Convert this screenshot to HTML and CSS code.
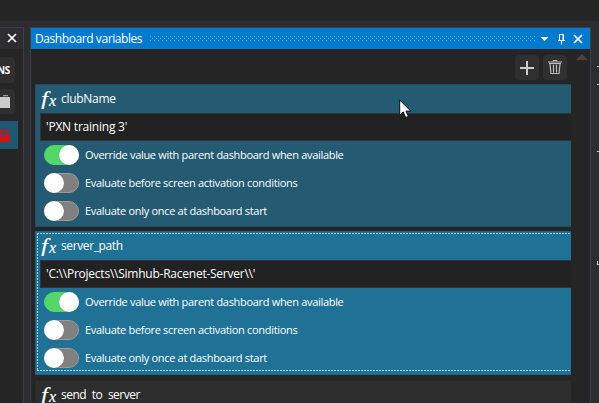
FILE: index.html
```html
<!DOCTYPE html>
<html lang="en">
<head>
<meta charset="utf-8">
<title>Dashboard variables</title>
<link rel="stylesheet" href="styles.css">
</head>
<body>
<svg width="0" height="0" class="defs">
  <symbol id="close" viewBox="0 0 10 10"><path d="M1 1l8 8M9 1l-8 8" stroke="#fff" stroke-width="1.7" fill="none"/></symbol>
</svg>
<div class="topbar"></div>
<div class="workspace">
  <aside class="side">
    <div class="side-head"><svg width="10" height="10"><use href="#close"/></svg></div>
    <div class="side-body">
      <div class="side-btn"><span>NS</span></div>
      <div class="side-btn second"><svg width="10" height="15" viewBox="0 0 10 15"><path d="M3 1h5v1.300H3z" fill="#999"/><path d="M0 3h10v11H0z" fill="#ccc"/></svg></div>
      <div class="side-active"><svg width="10" height="15" viewBox="0 0 10 15"><path d="M0 6V3.500C1 .8 3 .7 4 .7C7 .7 8.800 3 8.800 6V7H10V14.300H0V7H6.500V5.500C6.500 3.600 5.400 2.700 4 2.700S1.500 3.600 1.500 5.500V7H0z" fill="#c9151b"/></svg></div>
    </div>
  </aside>
  <main class="panel">
    <header class="title">
      <h1>Dashboard variables</h1>
      <svg class="grip" width="385" height="5"><defs><pattern id="dots" width="4" height="4" patternUnits="userSpaceOnUse"><path d="M0 0h1v1H0zM2 2h1v1H2z" fill="#62aee0"/></pattern></defs><rect width="385" height="5" fill="url(#dots)"/></svg>
      <svg class="tools" width="46" height="12" viewBox="0 0 46 12"><path d="M.5 4h8l-4 4z" fill="#fff"/><path d="M19.500 7V1.500h4V7M18 7.500h7M21.500 7.500v4" fill="none" stroke="#fff"/><path d="M23 1v6" stroke="#fff"/><path d="M34 2l8 8M42 2l-8 8" stroke="#fff" stroke-width="1.700"/></svg>
    </header>
    <div class="content">
      <div class="actions">
        <button aria-label="Add"><svg width="14" height="14" viewBox="0 0 14 14"><path d="M7 0v14M0 7h14" stroke="#ccc" stroke-width="2"/></svg></button>
        <button aria-label="Delete"><svg width="14" height="15" viewBox="0 0 14 15"><path d="M5 1.500V.5h4v1M0 2h14" fill="none" stroke="#bbb"/><path d="M1 3.500h12M2 4l1 9.500h8L12 4M5.500 4.500v8M8.500 4.500v8" fill="none" stroke="#bbb" stroke-width="1.200"/></svg></button>
        <svg class="scroll-up" width="12" height="6"><path d="M0 6l6-6 6 6z" fill="#454545"/></svg>
      </div>
      <section class="card">
        <h2><span class="fx"><b>f</b><sub>x</sub></span><span class="n1">clubName</span></h2>
        <div class="field"><span class="v1">'PXN training 3'</span></div>
        <div class="options">
          <div class="option"><i class="switch on"></i><span class="o1">Override value with parent dashboard when available</span></div>
          <div class="option"><i class="switch"></i><span class="o2">Evaluate before screen activation conditions</span></div>
          <div class="option"><i class="switch"></i><span class="o3">Evaluate only once at dashboard start</span></div>
        </div>
      </section>
      <section class="card selected">
        <h2><span class="fx"><b>f</b><sub>x</sub></span><span class="n2">server_path</span></h2>
        <div class="field"><span class="v2">'C:\\Projects\\Simhub-Racenet-Server\\'</span></div>
        <div class="options">
          <div class="option"><i class="switch on"></i><span class="o1">Override value with parent dashboard when available</span></div>
          <div class="option"><i class="switch"></i><span class="o2">Evaluate before screen activation conditions</span></div>
          <div class="option"><i class="switch"></i><span class="o3">Evaluate only once at dashboard start</span></div>
        </div>
        <svg class="focus" width="535" height="143"><path d="M1 2.500H535M1.500 2V140M1 139.500H535" fill="none" stroke="#a9d0e2" stroke-dasharray="2 1"/></svg>
      </section>
      <section class="card plain">
        <h2><span class="fx"><b>f</b><sub>x</sub></span><span class="n3">send to server</span></h2>
      </section>
    </div>
  </main>
  <svg class="edge" width="2" height="376"><path d="M0 39.500h2M0 57.500h2M0 124.500h2M.5 234v4M0 237.500h2" stroke="#b8d8dc" fill="none"/></svg>
</div>
<svg class="cursor" width="13" height="20" viewBox="0 0 13 20"><path d="M.7 1v15.200l3.500-3.300 2.500 5.700 2.700-1.200-2.400-5.300h4.800z" fill="#fff" stroke="#080d18"/></svg>
</body>
</html>
```
FILE: styles.css
```css
* { box-sizing: border-box; }
body { margin: 0; width: 599px; height: 403px; overflow: hidden; background: #2d2d30; color: #fff; font: 11px/16px "Open Sans", "Noto Sans", sans-serif; }
svg { display: block; flex: none; }
.defs { position: absolute; }
h1, h2 { margin: 0; font-weight: 400; font-size: 12px; }
span, h1 { white-space: nowrap; }
.topbar { height: 21px; background: #252526; }
.workspace { display: flex; height: 382px; padding-top: 6px; }
.side { width: 24px; border: solid #3f3f46; border-width: 1px 1px 0 0; background: #252526; }
.side-head { height: 21px; padding: 5px 0 0 7px; background: #2d2d30; }
.side-body { padding-top: 8px; }
.side-btn { width: 15px; height: 26px; border-radius: 0 4px 4px 0; background: #2f2f2f; display: flex; align-items: center; justify-content: flex-end; padding-right: 5px; font-size: 10px; font-weight: 700; letter-spacing: -.3px; }
.side-btn.second { height: 25px; margin-top: 6px; }
.side-active { width: 18px; height: 28px; margin-top: 7px; padding-top: 7px; background: #1f5872; }
.panel { width: 561px; margin-left: 6px; border: solid #3f3f46; border-width: 1px 1px 0; background: #252526; }
.title { display: flex; align-items: center; height: 21px; padding-left: 4px; background: #007acc; }
.title h1 { width: 107px; letter-spacing: -.42px; }
.grip { margin-left: 8px; width: 385px; }
.tools { margin-left: 5px; }
.content { padding-left: 4px; }
.actions { display: flex; height: 35px; padding: 6px 0 0 480px; gap: 4px; }
button { width: 24px; height: 25px; padding: 0; border: 0; border-radius: 4px; background: #303030; display: grid; place-items: center; }
.scroll-up { margin: -1px 0 0 5px; }
.card { position: relative; width: 536px; height: 143px; margin-bottom: 4px; background: #245b72; border: solid #204d61; border-width: 1px 0 1px 1px; }
.card h2 { display: flex; height: 28px; padding: 0 0 0 5px; align-items: center; }
.fx { display: flex; width: 20px; font: italic 19px/18px "Liberation Serif", serif; -webkit-text-stroke: .2px #fff; }
.fx b { width: 8px; padding-left: 1px; font-weight: 400; transform: scaleX(1.25); }
.fx sub { font-size: 16px; line-height: 18px; vertical-align: 0; margin: 2px 0 -2px; }
.n1 { letter-spacing: -.3px; }
.n2 { letter-spacing: -.38px; }
.n3 { letter-spacing: -.5px; word-spacing: 3px; }
.v1 { letter-spacing: -.22px; }
.v2 { letter-spacing: -.24px; }
.o1, .o2, .o3 { letter-spacing: -.31px; }
.field { display: flex; align-items: center; height: 28px; margin-left: 4px; padding: 0 0 0 5px; border: solid #333337; border-width: 1px 0 1px 1px; background: #222; font-size: 12px; }
.options { padding-left: 8px; }
.option { display: flex; align-items: center; gap: 6px; height: 28px; }
.switch { width: 35px; height: 20px; border-radius: 10px; background: #808080; border: 1px solid #9b9b9b; display: flex; }
.switch::before { content: ""; width: 20px; height: 20px; margin: -1px; border-radius: 50%; background: #fff; box-shadow: 0 0 1px #666; }
.switch.on { background: #53d769; border-color: #53d769; justify-content: flex-end; }
.card.selected { height: 144px; margin-bottom: 5px; background: #1f7296; border-color: #1b6585; }
.focus { position: absolute; left: 0; top: -1px; }
.card.plain { background: #2d2d2d; border-color: #292929; height: 30px; }
.edge { margin-left: 6px; }
.cursor { position: absolute; left: 399px; top: 99px; }
```
